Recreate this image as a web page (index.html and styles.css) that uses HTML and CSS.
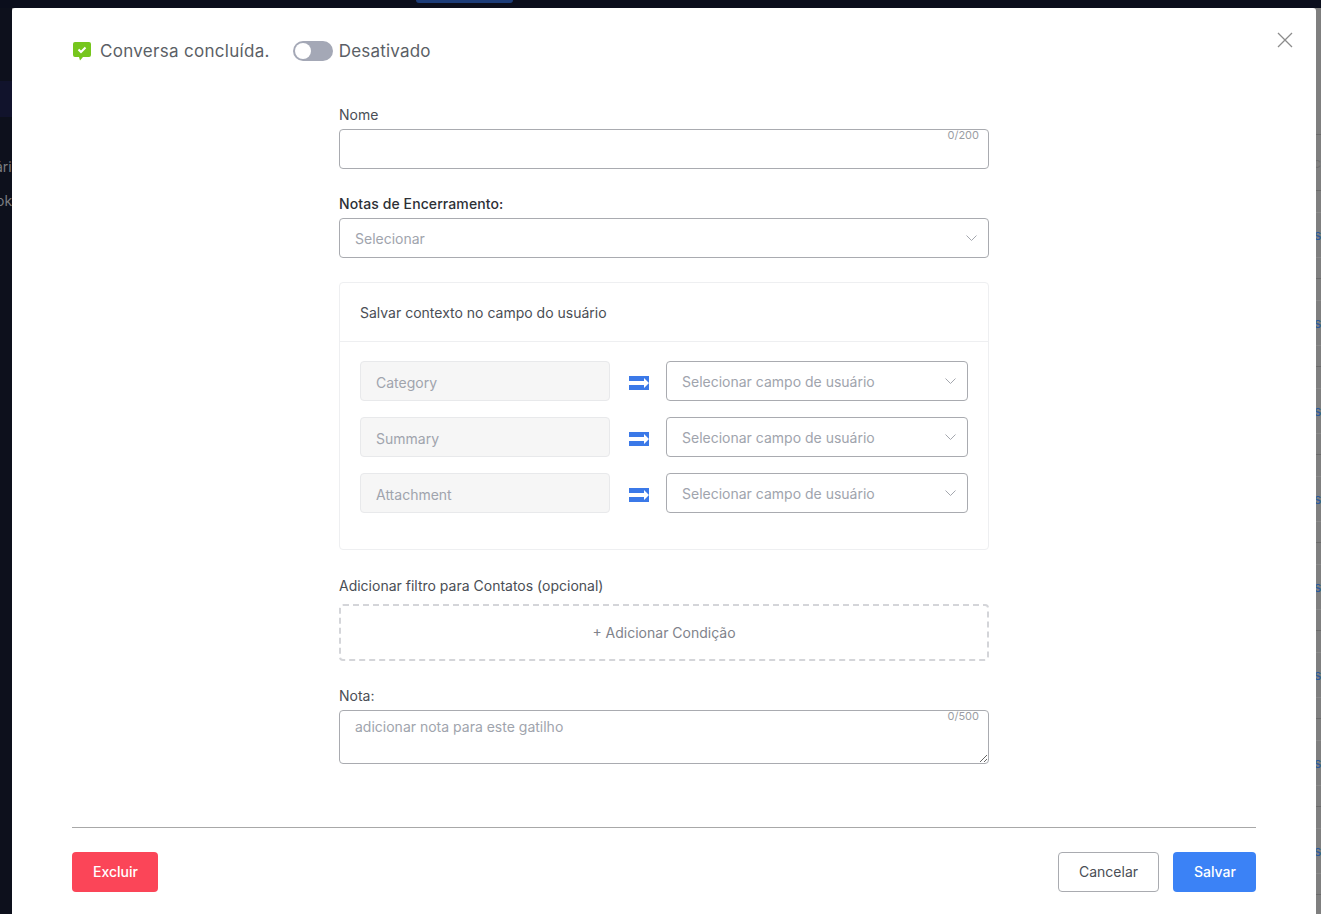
FILE: index.html
```html
<!DOCTYPE html>
<html>
    <head>
        <meta charset='utf-8'/>
        <link rel="stylesheet" href="styles.css">
    </head>
    <body>
        <div class='app'>
            <div class='topbar'><span class='topbar-tab'></span></div>
            <div class='behind'>
                <div class='sidebar'>
                    <span class='side-glow'></span>
                    <span class='side-text first'>ári</span>
                    <span class='side-text'>ok</span>
                </div>
                <div class='table'>
                    <div class='table-row head'></div>
                    <div class='table-row short'><span class='link grey'>c</span></div>
                    <div class='table-row'><span class='link'>s</span></div>
                    <div class='table-row'><span class='link'>s</span></div>
                    <div class='table-row'><span class='link'>s</span></div>
                    <div class='table-row'><span class='link'>s</span></div>
                    <div class='table-row'><span class='link'>s</span></div>
                    <div class='table-row'><span class='link'>s</span></div>
                    <div class='table-row'><span class='link'>s</span></div>
                    <div class='table-row'><span class='link'>s</span></div>
                    <div class='table-row'></div>
                </div>
            </div>

            <div class='modal'>
                <svg class='close' width='16' height='16' viewBox='0 0 16 16'>
                    <path d='M1 1 L15 15 M15 1 L1 15' stroke='#8c8c8c' stroke-width='1.3' fill='none'/>
                </svg>

                <div class='modal-head'>
                    <svg class='chat-icon' width='18' height='19' viewBox='0 0 18 19'>
                        <path d='M2 0 H16 Q18 0 18 2 V13 Q18 15 16 15 H10 L7 18.5 L6 15 H2 Q0 15 0 13 V2 Q0 0 2 0 Z' fill='#76c61d'/>
                        <path d='M5.5 7.5 L8 10 L12.5 5.5' stroke='#fff' stroke-width='2' fill='none'/>
                    </svg>
                    <span class='head-title'>Conversa concluída.</span>
                    <span class='switch'><span class='switch-knob'></span></span>
                    <span class='head-state'>Desativado</span>
                </div>

                <div class='form'>
                    <div class='field name-field'>
                        <label class='label'>Nome</label>
                        <div class='input-wrap'>
                            <input class='input' type='text'>
                            <span class='counter'>0/200</span>
                        </div>
                    </div>

                    <div class='field'>
                        <label class='label strong'>Notas de Encerramento:</label>
                        <div class='select'>
                            <span>Selecionar</span>
                            <svg class='chevron' width='11' height='6' viewBox='0 0 11 6'><path d='M.5 .5 L5.5 5.500 L10.500 .5' stroke='#a4a7ae' stroke-width='1' fill='none'/></svg>
                        </div>
                    </div>

                    <div class='card'>
                        <div class='card-head'>Salvar contexto no campo do usuário</div>
                        <div class='card-body'>
                            <div class='map-row'>
                                <div class='readonly'>Category</div>
                                <svg class='arrow' width='20' height='14' viewBox='0 0 20 14'>
                                    <rect width='20' height='14' fill='#3b79e8'/>
                                    <path d='M0 5 H15 V2 L20 7 L15 12 V9 H0 Z' fill='#fff'/>
                                </svg>
                                <div class='select user-select'>
                                    <span>Selecionar campo de usuário</span>
                                    <svg class='chevron' width='11' height='6' viewBox='0 0 11 6'><path d='M.5 .5 L5.5 5.500 L10.500 .5' stroke='#a4a7ae' stroke-width='1' fill='none'/></svg>
                                </div>
                            </div>
                            <div class='map-row'>
                                <div class='readonly'>Summary</div>
                                <svg class='arrow' width='20' height='14' viewBox='0 0 20 14'>
                                    <rect width='20' height='14' fill='#3b79e8'/>
                                    <path d='M0 5 H15 V2 L20 7 L15 12 V9 H0 Z' fill='#fff'/>
                                </svg>
                                <div class='select user-select'>
                                    <span>Selecionar campo de usuário</span>
                                    <svg class='chevron' width='11' height='6' viewBox='0 0 11 6'><path d='M.5 .5 L5.5 5.500 L10.500 .5' stroke='#a4a7ae' stroke-width='1' fill='none'/></svg>
                                </div>
                            </div>
                            <div class='map-row'>
                                <div class='readonly'>Attachment</div>
                                <svg class='arrow' width='20' height='14' viewBox='0 0 20 14'>
                                    <rect width='20' height='14' fill='#3b79e8'/>
                                    <path d='M0 5 H15 V2 L20 7 L15 12 V9 H0 Z' fill='#fff'/>
                                </svg>
                                <div class='select user-select'>
                                    <span>Selecionar campo de usuário</span>
                                    <svg class='chevron' width='11' height='6' viewBox='0 0 11 6'><path d='M.5 .5 L5.5 5.500 L10.500 .5' stroke='#a4a7ae' stroke-width='1' fill='none'/></svg>
                                </div>
                            </div>
                        </div>
                    </div>

                    <div class='field filter-field'>
                        <label class='label'>Adicionar filtro para Contatos (opcional)</label>
                        <div class='add-condition'>+ Adicionar Condição</div>
                    </div>

                    <div class='field note-field'>
                        <label class='label'>Nota:</label>
                        <div class='input-wrap'>
                            <textarea class='note' placeholder='adicionar nota para este gatilho'></textarea>
                            <span class='counter'>0/500</span>
                        </div>
                    </div>
                </div>

                <div class='modal-foot'>
                    <button class='btn btn-danger'>Excluir</button>
                    <div class='foot-right'>
                        <button class='btn btn-default'>Cancelar</button>
                        <button class='btn btn-primary'>Salvar</button>
                    </div>
                </div>
            </div>
        </div>
    </body>
</html>
```

FILE: styles.css
```css
*{
    box-sizing: border-box;
}
html,body{
    margin:0;
    padding:0;
    height:100%;
    overflow:hidden;
}
body{
    font-family: Inter, "Noto Sans", sans-serif;
    font-size:14px;
    color:#3d4148;
}
.app{
    position:relative;
    width:1321px;
    height:914px;
    overflow:hidden;
    display:flex;
    flex-direction:column;
    background-color:#7f7f7f;
}

/* page behind the dialog */
.topbar{
    height:8px;
    flex:none;
    background-color:#0b0e1c;
}
.topbar-tab{
    display:block;
    width:97px;
    height:3px;
    margin-left:416px;
    background-color:#1c3c78;
    border-radius:0 0 3px 3px;
}
.behind{
    flex:1;
    display:flex;
    justify-content:space-between;
}
.sidebar{
    width:12px;
    background-color:#0d101c;
    display:flex;
    flex-direction:column;
    overflow:hidden;
}
.side-glow{
    display:block;
    height:36px;
    margin-top:73px;
    background-color:#11132c;
}
.side-text{
    color:#7b7c80;
    font-size:14px;
    line-height:20px;
    margin-top:14px;
    margin-left:-4px;
    white-space:nowrap;
}
.side-text.first{
    margin-top:40px;
    margin-left:-5px;
}
.table{
    width:5px;
    overflow:hidden;
}
.table-row{
    height:88px;
    border-bottom:1px solid #6b6b6b;
    color:#2b5a9c;
    font-size:14px;
    line-height:20px;
    padding-top:34px;
    background:
        linear-gradient(#8a8a8a,#8a8a8a) 0 21px/100% 1px no-repeat,
        linear-gradient(#8a8a8a,#8a8a8a) 0 66px/100% 1px no-repeat;
}
.table-row.head{
    height:127px;
    padding:0;
    background:none;
}
.table-row.short{
    height:56px;
    padding-top:18px;
    background:none;
}
.link{
    display:block;
    margin-left:-2px;
}
.link.grey{
    color:#6f6f6f;
    margin-left:-3px;
}

/* dialog */
.modal{
    position:absolute;
    left:12px;
    top:8px;
    width:1304px;
    height:906px;
    padding:0 60px;
    background-color:#fff;
    border-radius:3px 3px 0 0;
    display:flex;
    flex-direction:column;
}
.close{
    position:absolute;
    top:24px;
    right:23px;
}
.modal-head{
    display:flex;
    align-items:center;
    height:20px;
    margin-top:33px;
    font-size:17px;
    color:#5b5f66;
}
.chat-icon{
    margin-left:1px;
    margin-right:9px;
}
.head-title{
    letter-spacing:.3px;
}
.head-state{
    letter-spacing:.2px;
}
.switch{
    width:40px;
    height:20px;
    margin-left:23px;
    margin-right:6px;
    border-radius:10px;
    background-color:#a4a8b6;
    padding:2px;
}
.switch-knob{
    display:block;
    width:16px;
    height:16px;
    border-radius:50%;
    background-color:#fff;
}

.form{
    width:650px;
    margin:0 auto;
    padding-top:44px;
    flex:1;
}
.field{
    margin-bottom:24px;
}
.name-field{
    margin-bottom:25px;
}
.label{
    display:block;
    height:20px;
    line-height:20px;
    margin-bottom:4px;
    color:#4a4e55;
}
.label.strong{
    font-weight:500;
    color:#2d3036;
    letter-spacing:.1px;
}
.input-wrap{
    position:relative;
}
.input{
    display:block;
    width:100%;
    height:40px;
    border:1px solid #a9abb0;
    border-radius:4px;
    outline:none;
    background:#fff;
}
.counter{
    position:absolute;
    top:0;
    right:10px;
    font-size:11px;
    line-height:13px;
    color:#9a9da3;
}
.select{
    display:flex;
    align-items:center;
    justify-content:space-between;
    height:40px;
    padding:0 11px 0 15px;
    border:1px solid #a9abb0;
    border-radius:4px;
    color:#a0a4ad;
    background:#fff;
}
.chevron{
    flex:none;
}

.card{
    height:268px;
    border:1px solid #eeeff1;
    border-radius:4px;
    margin-bottom:26px;
}
.card-head{
    height:59px;
    line-height:59px;
    padding-left:20px;
    border-bottom:1px solid #eeeff1;
    color:#4a4e55;
}
.card-body{
    padding:19px 20px 0;
}
.map-row{
    display:flex;
    align-items:center;
    margin-bottom:16px;
}
.readonly{
    width:250px;
    height:40px;
    line-height:41px;
    padding-left:15px;
    border:1px solid #e8e9eb;
    border-radius:4px;
    background-color:#f6f6f6;
    color:#a0a4ad;
}
.arrow{
    margin:4px 17px 0 19px;
    flex:none;
}
.user-select{
    flex:1;
}

.filter-field{
    margin-bottom:25px;
}
.filter-field .label{
    margin-bottom:8px;
}
.add-condition{
    height:57px;
    line-height:54px;
    text-align:center;
    border:2px dashed #d4d5d9;
    border-radius:4px;
    color:#7f838b;
}
.note-field{
    margin-bottom:0;
}
.note{
    display:block;
    width:100%;
    height:54px;
    padding:6px 15px;
    border:1px solid #a9abb0;
    border-radius:4px;
    outline:none;
    font-family:inherit;
    font-size:14px;
    line-height:20px;
    color:#3d4148;
}
.note::placeholder{
    color:#a0a4ad;
    opacity:1;
}

.modal-foot{
    display:flex;
    justify-content:space-between;
    align-items:flex-start;
    height:87px;
    padding-top:24px;
    border-top:1px solid #a8a8a8;
}
.foot-right{
    display:flex;
    gap:14px;
}
.btn{
    height:40px;
    padding:0 20px 2px;
    border-radius:4px;
    border:1px solid transparent;
    font-family:inherit;
    font-size:14px;
    cursor:pointer;
}
.btn-danger{
    width:86px;
    background-color:#fb4558;
    color:#fff;
    font-weight:500;
}
.btn-default{
    width:101px;
    background-color:#fff;
    border-color:#a9abb0;
    color:#4a4e55;
}
.btn-primary{
    width:83px;
    background-color:#3b82f6;
    color:#fff;
    font-weight:500;
}
```
